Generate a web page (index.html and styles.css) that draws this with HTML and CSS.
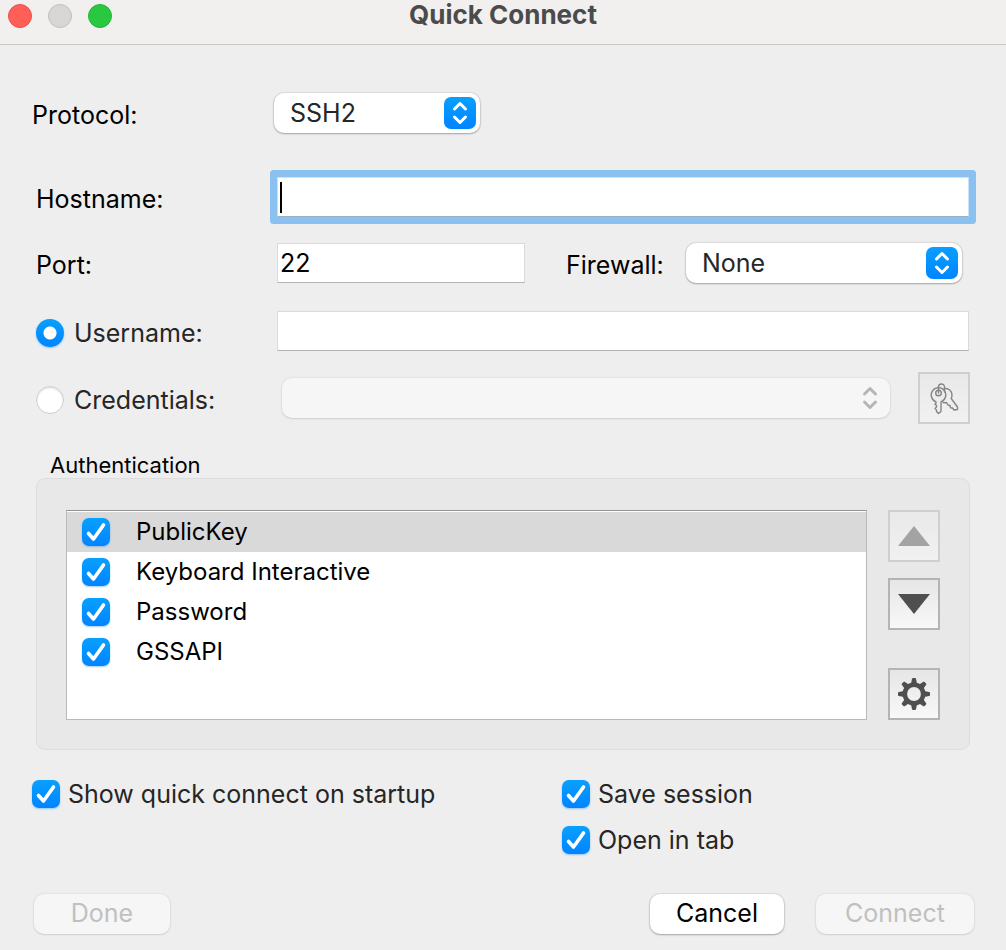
FILE: index.html
```html
<!DOCTYPE html>
<html lang="en">
<head>
<meta charset="utf-8">
<meta name="viewport" content="width=device-width, initial-scale=1">
<title>Quick Connect</title>
<link rel="stylesheet" href="styles.css">
</head>
<body class="window">
<header class="titlebar">
  <div class="lights">
    <button class="light light-close" type="button" aria-label="Close"></button>
    <button class="light light-min" type="button" aria-label="Minimize" disabled></button>
    <button class="light light-zoom" type="button" aria-label="Zoom"></button>
  </div>
  <h1 class="title">Quick Connect</h1>
</header>
<form class="content">
  <div class="row row-protocol">
    <label class="label" for="protocol">Protocol:</label>
    <select class="popup popup-protocol" id="protocol"><option>SSH2</option></select>
  </div>
  <div class="row row-host">
    <label class="label" for="host">Hostname:</label>
    <input class="field field-focus" id="host" type="text">
  </div>
  <div class="row row-port">
    <label class="label" for="port">Port:</label>
    <input class="field field-port" id="port" type="text" value="22">
    <label class="label label-firewall" for="firewall">Firewall:</label>
    <select class="popup popup-firewall" id="firewall"><option>None</option></select>
  </div>
  <div class="row row-user">
    <label class="label choice soft"><input class="radio" type="radio" name="who" checked>Username:</label>
    <input class="field" type="text" aria-label="Username">
  </div>
  <div class="row row-cred">
    <label class="label choice soft"><input class="radio" type="radio" name="who">Credentials:</label>
    <select class="popup popup-cred" aria-label="Credentials" disabled><option></option></select>
    <button class="tool" type="button" aria-label="Manage credentials" disabled>
      <svg width="30" height="34" viewBox="0 0 30 34" fill="none" stroke="#858585" stroke-width="1.4" stroke-linejoin="round" stroke-linecap="round">
        <path d="M15.500 7.500c4-.5 7.500 2.500 7.500 6.500 0 1.500-.3 2.500-.8 3.500l6.300 8.500v2.500l-3.500.5-1.500-2-2-.3-.5-2.200-2-.5-1.500-2.500c-1.500.3-2.500.3-3.500 0"/>
        <path d="M7 20.800A7.300 7.300 0 1 1 12 20.800V30.500L9.500 32.500 7.500 30.500V29L6 27.500 7.500 26V24.500L6 23.300 7 22z"/>
        <circle cx="9.500" cy="12" r="2.800"/>
        <path d="M9.500 12V6a3 3 0 0 1 6 0V11"/>
      </svg>
    </button>
  </div>
  <fieldset class="auth">
    <legend class="auth-title">Authentication</legend>
    <div class="panel">
      <div class="list">
        <label class="item item-selected"><input class="check" type="checkbox" checked>PublicKey</label>
        <label class="item"><input class="check" type="checkbox" checked>Keyboard Interactive</label>
        <label class="item"><input class="check" type="checkbox" checked>Password</label>
        <label class="item"><input class="check" type="checkbox" checked>GSSAPI</label>
      </div>
      <div class="tools">
        <button class="tool" type="button" aria-label="Move up" disabled>
          <svg width="32" height="20" viewBox="0 0 32 20"><path fill="#a3a3a3" d="M16 0l16 20H0z"/></svg>
        </button>
        <button class="tool" type="button" aria-label="Move down">
          <svg width="32" height="20" viewBox="0 0 32 20"><path fill="#4f4f4f" d="M0 0h32L16 20z"/></svg>
        </button>
        <button class="tool tool-gear" type="button" aria-label="Properties">
          <svg width="32" height="32" viewBox="-16 -16 32 32">
            <circle r="9.200" fill="none" stroke="#4f4f4f" stroke-width="4.600"/>
            <g fill="#4f4f4f">
              <path id="tooth" d="M-3 -10L-2 -15.200Q-1.800 -16 -1 -16H1Q1.800 -16 2 -15.200L3 -10z"/>
              <use href="#tooth" transform="rotate(45)"/>
              <use href="#tooth" transform="rotate(90)"/>
              <use href="#tooth" transform="rotate(135)"/>
              <use href="#tooth" transform="rotate(180)"/>
              <use href="#tooth" transform="rotate(225)"/>
              <use href="#tooth" transform="rotate(270)"/>
              <use href="#tooth" transform="rotate(315)"/>
            </g>
          </svg>
        </button>
      </div>
    </div>
  </fieldset>
  <div class="options">
    <label class="option soft"><input class="check" type="checkbox" checked>Show quick connect on startup</label>
    <div class="option-group">
      <label class="option soft"><input class="check" type="checkbox" checked>Save session</label>
      <label class="option soft"><input class="check" type="checkbox" checked>Open in tab</label>
    </div>
  </div>
  <div class="actions">
    <button class="push push-done" type="button" disabled>Done</button>
    <button class="push push-cancel" type="button">Cancel</button>
    <button class="push push-connect" type="submit" disabled>Connect</button>
  </div>
</form>
</body>
</html>
```
FILE: styles.css
```css
* { box-sizing: border-box; }

input, select, button {
  margin: 0;
  font: inherit;
  color: inherit;
}

.window {
  margin: 0;
  min-height: 100vh;
  background: #eeeeee;
  color: #000;
  font: 25px/28px Inter, "Liberation Sans", sans-serif;
}

/* Title bar */
.titlebar {
  display: grid;
  grid-template-columns: 1fr auto 1fr;
  height: 45px;
  background: #f1f0ee;
  border-bottom: 1px solid #c5c7c9;
}
.lights { display: flex; gap: 16px; padding: 4px 8px; }
.light { width: 24px; height: 24px; padding: 0; border: 1px solid; border-radius: 50%; }
.light-close { background: #ff5f57; border-color: #e9504a; }
.light-min { background: #d8d7d6; border-color: #c0bfbe; }
.light-zoom { background: #28c840; border-color: #24b33a; }
.title { margin: 0; color: #4b4b4b; font-size: 26px; font-weight: 700; line-height: 30px; }

.content { padding: 48px 30px 16px 32px; }

/* Form rows */
.row { display: flex; align-items: center; padding-right: 7px; }
.label { flex: none; width: 241px; padding-top: 3px; }
.row-protocol .label { width: 242px; }
.row-host, .row-port, .row-user, .row-cred { padding-left: 4px; }
.row-host { margin-top: 44px; }
.row-port { margin-top: 26px; padding-right: 14px; }
.row-user { margin-top: 28px; }
.row-cred { margin-top: 21px; padding-right: 6px; }
.soft { color: #262626; }
.choice { display: flex; align-items: center; gap: 10px; }

.field {
  flex: 1;
  min-width: 0;
  height: 40px;
  padding: 0 3px 0 2px;
  border: 1px solid #dadada;
  border-bottom-color: #b4b4b4;
  border-radius: 0;
  background: #fff;
  outline: none;
}
.field-focus {
  border-color: #c9e1f6;
  border-bottom-color: #9fb0c0;
  border-radius: 1px;
  background: linear-gradient(#000, #000) 2px 4px / 2px 31px no-repeat #fff;
  box-shadow: 0 0 0 7px #8bc1f1;
  caret-color: transparent;
}
.field-port { flex: 0 1 248px; }
.label-firewall { width: 120px; margin-left: 41px; }

.popup {
  appearance: none;
  min-width: 0;
  height: 40px;
  padding: 0 50px 0 16px;
  border: 0;
  border-radius: 10px;
  color: #262626;
  background: url("data:image/svg+xml,%3Csvg xmlns='http://www.w3.org/2000/svg' width='32' height='32'%3E%3Cdefs%3E%3ClinearGradient id='g' x2='0' y2='1'%3E%3Cstop stop-color='%2308a0ff'/%3E%3Cstop offset='1' stop-color='%230084ff'/%3E%3C/linearGradient%3E%3C/defs%3E%3Crect width='32' height='32' rx='7' fill='url(%23g)'/%3E%3Cpath d='M10.500 12L16 6.500l5.500 5.500M10.500 20L16 25.500l5.500-5.500' fill='none' stroke='white' stroke-width='3' stroke-linecap='round' stroke-linejoin='round'/%3E%3C/svg%3E") right 4px center no-repeat #fff;
  box-shadow: 0 0 1px 1px rgba(0, 0, 0, 0.08), 0 1px 2px rgba(0, 0, 0, 0.25);
}
.popup-protocol { width: 206px; }
.popup-firewall { flex: 1; }
.popup-cred {
  flex: 1;
  margin: 0 28px 0 5px;
  opacity: 1;
  background: url("data:image/svg+xml,%3Csvg xmlns='http://www.w3.org/2000/svg' width='32' height='32'%3E%3Cpath d='M10.500 12L16 6.500l5.500 5.500M10.500 20L16 25.500l5.500-5.500' fill='none' stroke='%23b5b5b5' stroke-width='3' stroke-linecap='round' stroke-linejoin='round'/%3E%3C/svg%3E") right 4px center no-repeat #f6f6f6;
  box-shadow: 0 0 1px 1px rgba(0, 0, 0, 0.04), 0 1px 2px rgba(0, 0, 0, 0.1);
}

.radio {
  appearance: none;
  flex: none;
  width: 28px;
  height: 28px;
  border-radius: 50%;
  background: #fff;
  border: 1px solid #cfcfcf;
  box-shadow: inset 0 1px 2px rgba(0, 0, 0, 0.15);
}
.radio:checked {
  border: 0;
  background: radial-gradient(circle, #fff 6px, transparent 7px), linear-gradient(#08a0ff, #0084ff);
  box-shadow: 0 1px 2px rgba(0, 132, 255, 0.4);
}

.check {
  appearance: none;
  flex: none;
  width: 28px;
  height: 28px;
  border: 1px solid #cfcfcf;
  border-radius: 7px;
  background: #fff;
}
.check:checked {
  border: 0;
  background: url("data:image/svg+xml,%3Csvg xmlns='http://www.w3.org/2000/svg' width='28' height='28'%3E%3Cpath d='M6.500 15.500l5 5.500L21.500 7' fill='none' stroke='white' stroke-width='3.600' stroke-linecap='round' stroke-linejoin='round'/%3E%3C/svg%3E"), linear-gradient(#08a0ff, #0084ff);
  box-shadow: 0 1px 2px rgba(0, 132, 255, 0.4);
}

/* Square bevel buttons */
.tool {
  flex: none;
  display: grid;
  place-items: center;
  width: 52px;
  height: 52px;
  padding: 0;
  border: 2px solid #b4b4b4;
  background: linear-gradient(#e6e6e6, #f8f8f8);
}
.tool:disabled { border-color: #cfcfcf; background: linear-gradient(#e9e9e9, #f1f1f1); }
.tool-gear { margin-top: 22px; }

/* Authentication group */
.auth { min-width: 0; margin: 28px 6px 0 4px; padding: 0; border: 0; }
.auth-title { padding: 0 0 0 14px; font-size: 22px; line-height: 26px; }
.panel {
  display: flex;
  gap: 21px;
  padding: 31px 29px 29px;
  border: 1px solid #dddddd;
  border-radius: 9px;
  background: #e8e8e8;
}
.list {
  flex: 1;
  padding-top: 1px;
  border: 1px solid #b9b9b9;
  border-top-color: #929292;
  background: #fff;
}
.item {
  display: flex;
  align-items: center;
  gap: 26px;
  height: 40px;
  padding-left: 15px;
  font-size: 24px;
}
.item-selected { background: #d9d9d9; }
.tools { display: flex; flex-direction: column; gap: 16px; }

/* Options and actions */
.options { display: grid; grid-template-columns: 530px 1fr; align-items: start; margin-top: 30px; }
.option-group { display: grid; gap: 18px; }
.option { display: flex; align-items: center; gap: 8px; }
.actions { display: flex; margin: 40px 2px 0; }
.push {
  height: 40px;
  padding: 0 0 2px;
  border: 0;
  border-radius: 10px;
  background: #fff;
  box-shadow: 0 0 1px 1px rgba(0, 0, 0, 0.08), 0 1px 2px rgba(0, 0, 0, 0.25);
}
.push:disabled {
  color: #c0c0c0;
  background: #f6f6f6;
  box-shadow: 0 0 1px 1px rgba(0, 0, 0, 0.04), 0 1px 2px rgba(0, 0, 0, 0.1);
}
.push-done { width: 136px; }
.push-cancel { width: 134px; margin-left: auto; margin-right: 32px; }
.push-connect { width: 158px; }
```
